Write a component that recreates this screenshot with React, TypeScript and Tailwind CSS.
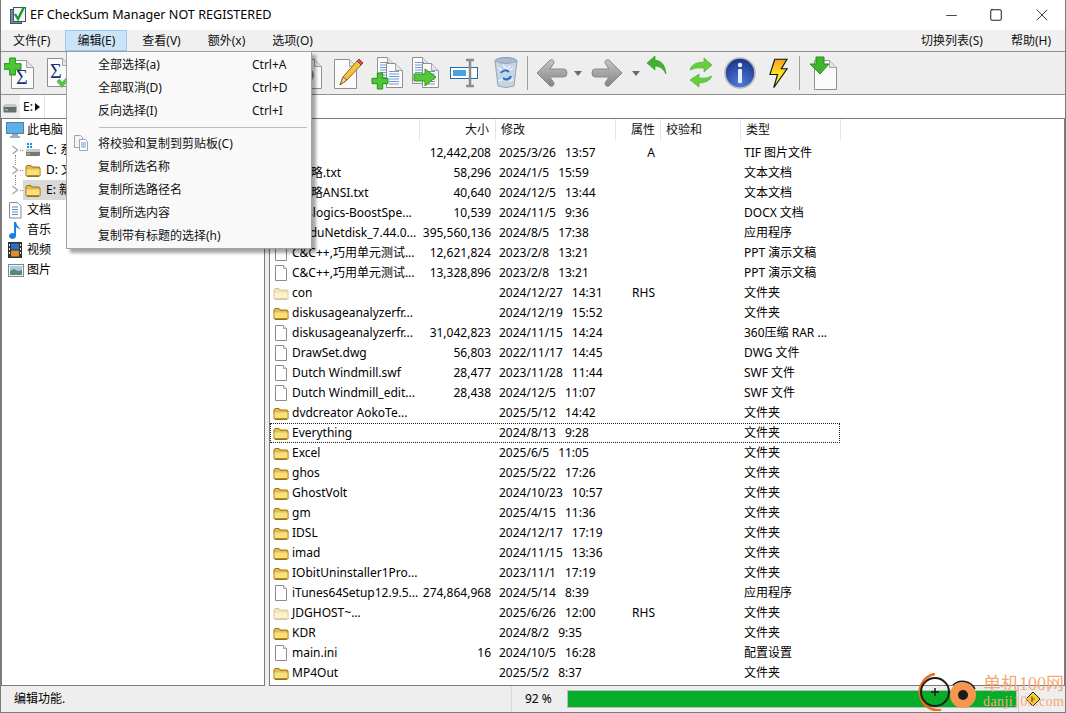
import { Minus, Square, X } from 'lucide-react'

const FONT = { fontFamily: '"Noto Sans", "Noto Sans CJK SC", sans-serif' }

function FileIcon() {
  return (
    <svg width="16" height="18" viewBox="0 0 16 18" className="shrink-0">
      <path d="M2.5 1.5h8l3 3v12h-11z" fill="#fff" stroke="#8a8a8a" />
      <path d="M10.5 1.5v3h3" fill="#eee" stroke="#a8a8a8" />
    </svg>
  )
}

function FolderIcon({ faded = false }: { faded?: boolean }) {
  return (
    <svg width="16" height="16" viewBox="0 0 16 16" className={`shrink-0 ${faded ? 'opacity-40' : ''}`}>
      <path d="M1 13.5V4.500l1-1h4l1 1.500h7l1 1v7.500l-1 1H2z" fill="#e3bb45" stroke="#94721a" />
      <path d="M1.500 7.500h13v6h-13z" fill="#f8e07e" />
      <path d="M1.500 13.500h13" stroke="#b48e1d" />
    </svg>
  )
}

function Sigma({ x, y, size = 20 }: { x: number; y: number; size?: number }) {
  return (
    <text x={x} y={y} fontSize={size} fontFamily="Liberation Serif, serif" fill="#1c2f78">
      Σ
    </text>
  )
}

function Doc({ x = 0, y = 0, w = 22, h = 28 }: { x?: number; y?: number; w?: number; h?: number }) {
  return (
    <g>
      <path d={`M${x + 0.5} ${y + 0.5}h${w - 7}l7 7v${h - 7}h-${w}z`} fill="#fbfbfb" stroke="#8f8f8f" />
      <path d={`M${x + w - 6.5} ${y + 0.5}v7h7`} fill="#e4e4e4" stroke="#a5a5a5" />
    </g>
  )
}

function GreenPlus({ x, y, s = 16 }: { x: number; y: number; s?: number }) {
  const t = s / 3
  return (
    <path
      d={`M${x + t} ${y}h${t}v${t}h${t}v${t}h-${t}v${t}h-${t}v-${t}h-${t}v-${t}h${t}z`}
      fill="#4fc637"
      stroke="#1f9316"
      strokeLinejoin="round"
    />
  )
}

function AddSumIcon() {
  return (
    <svg width="30" height="34" viewBox="0 0 30 34">
      <Doc x={7} y={4} w={22} h={28} />
      <Sigma x={12} y={28} size={20} />
      <GreenPlus x={0} y={2} s={17} />
    </svg>
  )
}

function CheckSumIcon() {
  return (
    <svg width="30" height="34" viewBox="0 0 30 34">
      <Doc x={0} y={2} w={22} h={28} />
      <Sigma x={3} y={22} size={20} />
      <path d="M11 24l4 5 9-10" fill="none" stroke="#58c44a" strokeWidth="4" />
    </svg>
  )
}

function DiscDocIcon() {
  return (
    <svg width="26" height="34" viewBox="0 0 26 34">
      <Doc x={3} y={3} w={22} h={29} />
      <circle cx="11" cy="19" r="7" fill="#8d8d8d" />
    </svg>
  )
}

function PencilDocIcon() {
  return (
    <svg width="30" height="34" viewBox="0 0 30 34">
      <Doc x={0} y={3} w={22} h={29} />
      <path d="M6 29l3-8 14-16 4 4-14 15z" fill="#f5c33b" stroke="#8c6a1a" />
      <path d="M6 29l3-8 4 3z" fill="#e9d3a5" stroke="#8c6a1a" />
      <path d="M23 5l2-2 4 4-2 2z" fill="#d8524f" stroke="#8c3a38" />
    </svg>
  )
}

function Lines({ x, y, n, w }: { x: number; y: number; n: number; w: number }) {
  return (
    <path
      d={Array.from({ length: n }, (_, i) => `M${x} ${y + i * 2.5 + 0.5}h${w}`).join('')}
      stroke="#6d9bd0"
      strokeWidth="1"
    />
  )
}

function AddDocIcon() {
  return (
    <svg width="32" height="34" viewBox="0 0 32 34">
      <Doc x={6} y={1} w={17} h={26} />
      <Lines x={9} y={6} n={8} w={9} />
      <Doc x={15} y={7} w={16} h={24} />
      <Lines x={18} y={15} n={6} w={10} />
      <GreenPlus x={1} y={17} s={16} />
    </svg>
  )
}

function MoveDocIcon() {
  return (
    <svg width="30" height="34" viewBox="0 0 30 34">
      <Doc x={1} y={1} w={17} h={26} />
      <Lines x={4} y={6} n={8} w={9} />
      <Doc x={11} y={7} w={16} h={24} />
      <Lines x={14} y={15} n={6} w={10} />
      <path d="M3 18h11v-5l11 8-11 9v-5H3z" fill="#55c838" stroke="#2a9a1c" />
    </svg>
  )
}

function RenameIcon() {
  return (
    <svg width="30" height="34" viewBox="0 0 30 34">
      <rect x="0.500" y="11.500" width="27" height="11" fill="#fff" stroke="#1f6fb0" />
      <rect x="3" y="14" width="13" height="6" fill="#4aa3e0" />
      <path d="M16 4h8M20 4v26M16 30h8" stroke="#8b8b8b" strokeWidth="2.500" fill="none" />
    </svg>
  )
}

function BinIcon() {
  return (
    <svg width="26" height="34" viewBox="0 0 26 34">
      <ellipse cx="13" cy="5" rx="11" ry="3.500" fill="#a9bbd0" stroke="#8c9aa8" />
      <path d="M2 5l3 25q8 3 16 0l3-25q-11 5-22 0z" fill="#c6d5e6" stroke="#9aa6b2" />
      <path d="M5 11l5 5M10 9l6 7M17 10l-5 6M20 12l-4 3M6 25l4-2M16 26l4-3" stroke="#eef3f8" strokeWidth="1.500" />
      <path d="M8 17a5 5 0 0 1 8-1M18 20a5 5 0 0 1-8 2" fill="none" stroke="#2f74c4" strokeWidth="2.200" />
    </svg>
  )
}

function GreyArrow({ flip = false }: { flip?: boolean }) {
  return (
    <svg width="32" height="30" viewBox="0 0 32 30" className={flip ? '-scale-x-100' : ''}>
      <defs>
        <linearGradient id="grey-arrow" x1="0" y1="0" x2="0" y2="1">
          <stop offset="0" stopColor="#c4c4c4" />
          <stop offset="1" stopColor="#858585" />
        </linearGradient>
      </defs>
      <path
        d="M1 15L14 2q4-1 4 3l-4 6h14q3 0 3 4t-3 4H14l4 6q0 4-4 3z"
        fill="url(#grey-arrow)"
        stroke="#8b8b8b"
      />
    </svg>
  )
}

function Caret() {
  return (
    <svg width="8" height="5" viewBox="0 0 8 5">
      <path d="M0 0h8L4 5z" fill="#6b6b6b" />
    </svg>
  )
}

function UndoIcon() {
  return (
    <svg width="20" height="20" viewBox="0 0 20 20">
      <path d="M0 7l8-7v4q10 1 11 14Q15 10 8 10v4z" fill="#3fb52f" stroke="#2a8f1f" strokeWidth=".6" />
    </svg>
  )
}

function RefreshIcon() {
  return (
    <svg width="24" height="32" viewBox="0 0 24 32">
      <path d="M1 13Q3 5 15 5V1l8 7-8 7v-4Q7 10 1 13z" fill="#63d13f" stroke="#46a82c" strokeWidth=".6" />
      <path d="M23 19q-3 7-13 7v4l-9-7 9-6v4q8 1 13-2z" fill="#63d13f" stroke="#46a82c" strokeWidth=".6" />
    </svg>
  )
}

function InfoIcon() {
  return (
    <svg width="32" height="32" viewBox="0 0 32 32">
      <defs>
        <radialGradient id="info-ball" cx="0.5" cy="0.85" r="0.9">
          <stop offset="0" stopColor="#4f7be0" />
          <stop offset="1" stopColor="#17307f" />
        </radialGradient>
      </defs>
      <circle cx="16" cy="16" r="15" fill="url(#info-ball)" stroke="#b9b9b9" strokeWidth="1.600" />
      <circle cx="16" cy="8" r="2.200" fill="#e8eefb" />
      <rect x="14" y="12" width="4" height="14" rx="1" fill="#e8eefb" />
    </svg>
  )
}

function BoltIcon() {
  return (
    <svg width="19" height="31" viewBox="0 0 20 32">
      <defs>
        <linearGradient id="bolt-fill" x1="0" y1="0" x2="0" y2="1">
          <stop offset="0" stopColor="#f7a21b" />
          <stop offset="0.5" stopColor="#ffe21f" />
          <stop offset="1" stopColor="#fff24a" />
        </linearGradient>
      </defs>
      <path d="M6 1h13l-6 10h6L5 31l4-14H1z" fill="url(#bolt-fill)" stroke="#111" strokeWidth="1.200" />
    </svg>
  )
}

function DownloadDocIcon() {
  return (
    <svg width="28" height="34" viewBox="0 0 28 34">
      <Doc x={4} y={4} w={22} h={29} />
      <path d="M6 1h8v7h5L10 18 0 8h6z" fill="#3fb52f" stroke="#2a8f1f" />
    </svg>
  )
}

function Separator({ className }: { className: string }) {
  return <div className={`h-[34px] w-px bg-[#a0a0a0] ${className}`} />
}

function TitleBar() {
  return (
    <div className="flex h-[30px] items-center bg-white pl-[9px]">
      <svg width="17" height="18" viewBox="0 0 17 18">
        <rect x="0.500" y="3.500" width="11" height="14" fill="#6f8fa8" stroke="#3d5266" />
        <rect x="3.500" y="1.500" width="12" height="14" fill="#f4f4f4" stroke="#3d5266" />
        <path d="M5 8l3 5 6-12" fill="none" stroke="#159a2b" strokeWidth="2.400" />
      </svg>
      <span className="ml-[3px] text-[12.6px] text-black">EF CheckSum Manager NOT REGISTERED</span>
      <div className="ml-auto flex items-center pr-[13px]">
        <Minus className="h-[17px] w-[17px] text-black" strokeWidth={1} />
        <Square className="ml-[29px] h-[14px] w-[14px] text-black" strokeWidth={1.5} />
        <X className="ml-[29px] h-[20px] w-[20px] text-black" strokeWidth={0.9} />
      </div>
    </div>
  )
}

function MenuBar() {
  const items = ['文件(F)', '编辑(E)', '查看(V)', '额外(x)', '选项(O)']
  return (
    <div className="flex h-[21px] items-stretch bg-[#f0f0f0] text-[12px] text-[#111]">
      <div className="flex gap-[3px]">
        {items.map((item) => (
          <div
            key={item}
            className={`flex items-center border px-[11px] ${
              item === '编辑(E)' ? 'border-[#99c9ef] bg-[#cce4f7]' : 'border-transparent'
            }`}
          >
            {item}
          </div>
        ))}
      </div>
      <div className="ml-auto flex items-center gap-[28px] pr-[14px]">
        <span>切换列表(S)</span>
        <span>帮助(H)</span>
      </div>
    </div>
  )
}

function Toolbar() {
  return (
    <div className="flex h-[44px] items-center border-y border-[#8f8f8f] bg-[#eeeeee] pl-[3px]">
      <AddSumIcon />
      <div className="ml-[13px]">
        <CheckSumIcon />
      </div>
      <div className="ml-[219px]">
        <DiscDocIcon />
      </div>
      <div className="ml-[12px]">
        <PencilDocIcon />
      </div>
      <div className="ml-[7px]">
        <AddDocIcon />
      </div>
      <div className="ml-[8px]">
        <MoveDocIcon />
      </div>
      <div className="ml-[9px]">
        <RenameIcon />
      </div>
      <div className="ml-[13px]">
        <BinIcon />
      </div>
      <Separator className="ml-[8px]" />
      <div className="ml-[8px]">
        <GreyArrow />
      </div>
      <div className="ml-[6px]">
        <Caret />
      </div>
      <div className="ml-[9px]">
        <GreyArrow flip />
      </div>
      <div className="ml-[9px]">
        <Caret />
      </div>
      <div className="mb-[14px] ml-[7px]">
        <UndoIcon />
      </div>
      <div className="ml-[22px]">
        <RefreshIcon />
      </div>
      <div className="ml-[11px]">
        <InfoIcon />
      </div>
      <div className="ml-[13px]">
        <BoltIcon />
      </div>
      <Separator className="ml-[11px]" />
      <div className="ml-[10px]">
        <DownloadDocIcon />
      </div>
    </div>
  )
}

function AddressBar() {
  return (
    <div className="flex h-[23px] items-center bg-white text-[12px] text-black">
      <div className="flex h-full w-[19px] items-center justify-center bg-[#eeeeee] pr-[2px] pt-[3px]">
        <svg width="14" height="10" viewBox="0 0 14 10">
          <rect x="0.500" y="2.500" width="13" height="7" rx="1" fill="#6b6b6b" />
          <rect x="1" y="1" width="12" height="3" rx="1" fill="#c8c8c8" />
          <rect x="2" y="6" width="3" height="1.500" fill="#5fe05f" />
        </svg>
      </div>
      <div className="flex h-full w-[25px] items-center border-r border-[#e3e3e3] pl-[3px] pt-px">
        <span>E:</span>
        <svg width="5" height="8" viewBox="0 0 5 8" className="ml-[2px]">
          <path d="M0 0l5 4-5 4z" fill="#111" />
        </svg>
      </div>
    </div>
  )
}

const TREE_DRIVES = [
  { label: 'C: 系统', drive: true },
  { label: 'D: 文档', drive: false },
  { label: 'E: 新加卷', drive: false, active: true },
]

function Chevron() {
  return (
    <svg width="8" height="10" viewBox="0 0 8 10" className="shrink-0">
      <path d="M1.500 1l5 4-5 4" fill="none" stroke="#a6a6a6" strokeWidth="1.400" />
    </svg>
  )
}

function DriveIcon() {
  return (
    <svg width="16" height="16" viewBox="0 0 16 16" className="shrink-0">
      <rect x="1" y="8" width="14" height="6" rx="1" fill="#777" />
      <rect x="1" y="7" width="14" height="3" rx="1" fill="#c9c9c9" />
      <rect x="2" y="11" width="3" height="1.500" fill="#5fe05f" />
      <path d="M2 1h2v2H2zM5 1h2v2H5zM2 4h2v2H2zM5 4h2v2H5z" fill="#1d8fe8" />
    </svg>
  )
}

function ComputerIcon() {
  return (
    <svg width="18" height="16" viewBox="0 0 18 16" className="shrink-0">
      <rect x="0.500" y="0.500" width="17" height="11" fill="#5ab0ea" stroke="#5e7f9a" />
      <path d="M6 12h6v2H6z" fill="#9ab" />
      <path d="M4 15h10" stroke="#7d93a6" strokeWidth="1.500" />
    </svg>
  )
}

function LibraryIcon({ kind }: { kind: 'doc' | 'music' | 'video' | 'image' }) {
  if (kind === 'doc') {
    return (
      <svg width="14" height="17" viewBox="0 0 14 17" className="shrink-0">
        <path d="M1.500.5h8l3.500 3.500v12H1.500z" fill="#fff" stroke="#888" />
        <path d="M4 5h6M4 7.500h6M4 10h6M4 12.500h6" stroke="#4a8fd0" />
      </svg>
    )
  }
  if (kind === 'music') {
    return (
      <svg width="14" height="18" viewBox="0 0 14 18" className="shrink-0">
        <path d="M6 1h2q1 5 5 7-3 0-5-2v9a3.500 3 0 1 1-2-2.800z" fill="#1c7fe0" />
      </svg>
    )
  }
  if (kind === 'video') {
    return (
      <svg width="14" height="16" viewBox="0 0 14 16" className="shrink-0">
        <rect width="14" height="16" fill="#333" />
        <rect x="3" y="1.500" width="8" height="6" fill="#2e6fbe" />
        <rect x="3" y="8.500" width="8" height="6" fill="#d9902f" />
        <path d="M1 2h1v2H1zM1 6h1v2H1zM1 10h1v2H1zM12 2h1v2h-1zM12 6h1v2h-1zM12 10h1v2h-1z" fill="#eee" />
      </svg>
    )
  }
  return (
    <svg width="16" height="13" viewBox="0 0 16 13" className="shrink-0">
      <rect x="0.500" y="0.500" width="15" height="12" fill="#eef3f7" stroke="#7c8a96" />
      <rect x="2" y="2" width="12" height="5" fill="#a9cbe6" />
      <path d="M2 7l4-2 4 2 4-1v5H2z" fill="#5b8a6b" />
    </svg>
  )
}

function Tree() {
  return (
    <div className="h-full w-[264px] shrink-0 overflow-hidden border border-[#7a7a7a] bg-white pt-[1px] text-[12px] text-black">
      <div className="flex h-[20px] items-center pl-[4px]">
        <ComputerIcon />
        <span className="ml-[3px]">此电脑</span>
      </div>
      {TREE_DRIVES.map((row) => (
        <div key={row.label} className="relative flex h-[20px] items-center pl-[9px]">
          <Chevron />
          {!row.active && (
            <span className="absolute left-[13px] top-[15px] h-[10px] border-l border-dotted border-[#888]" />
          )}
          <span className="ml-px w-[3px] border-t border-dotted border-[#888]" />
          <div className={`flex h-full flex-1 items-center pl-[2px] ${row.active ? 'bg-[#d9d9d9]' : ''}`}>
            {row.drive ? <DriveIcon /> : <FolderIcon />}
            <span className="ml-[5px]">{row.label}</span>
          </div>
        </div>
      ))}
      {[
        { label: '文档', kind: 'doc' as const },
        { label: '音乐', kind: 'music' as const },
        { label: '视频', kind: 'video' as const },
        { label: '图片', kind: 'image' as const },
      ].map((row) => (
        <div key={row.label} className="flex h-[20px] items-center pl-[6px]">
          <div className="flex w-[19px] shrink-0 items-center">
            <LibraryIcon kind={row.kind} />
          </div>
          <span>{row.label}</span>
        </div>
      ))}
    </div>
  )
}

type Row = {
  name: string
  size?: string
  date: string
  time: string
  attr?: string
  type: string
  icon: 'file' | 'folder' | 'hidden'
  focused?: boolean
}

const ROWS: Row[] = [
  { name: '.TIF', size: '12,442,208', date: '2025/3/26', time: '13:57', attr: 'A', type: 'TIF 图片文件', icon: 'file' },
  { name: '9攻略.txt', size: '58,296', date: '2024/1/5', time: '15:59', type: '文本文档', icon: 'file' },
  { name: '9攻略ANSI.txt', size: '40,640', date: '2024/12/5', time: '13:44', type: '文本文档', icon: 'file' },
  { name: 'Auslogics-BoostSpe...', size: '10,539', date: '2024/11/5', time: '9:36', type: 'DOCX 文档', icon: 'file' },
  { name: 'BaiduNetdisk_7.44.0...', size: '395,560,136', date: '2024/8/5', time: '17:38', type: '应用程序', icon: 'file' },
  { name: 'C&C++,巧用单元测试...', size: '12,621,824', date: '2023/2/8', time: '13:21', type: 'PPT 演示文稿', icon: 'file' },
  { name: 'C&C++,巧用单元测试...', size: '13,328,896', date: '2023/2/8', time: '13:21', type: 'PPT 演示文稿', icon: 'file' },
  { name: 'con', date: '2024/12/27', time: '14:31', attr: 'RHS', type: '文件夹', icon: 'hidden' },
  { name: 'diskusageanalyzerfr...', date: '2024/12/19', time: '15:52', type: '文件夹', icon: 'folder' },
  { name: 'diskusageanalyzerfr...', size: '31,042,823', date: '2024/11/15', time: '14:24', type: '360压缩 RAR ...', icon: 'file' },
  { name: 'DrawSet.dwg', size: '56,803', date: '2022/11/17', time: '14:45', type: 'DWG 文件', icon: 'file' },
  { name: 'Dutch Windmill.swf', size: '28,477', date: '2023/11/28', time: '11:44', type: 'SWF 文件', icon: 'file' },
  { name: 'Dutch Windmill_edit...', size: '28,438', date: '2024/12/5', time: '11:07', type: 'SWF 文件', icon: 'file' },
  { name: 'dvdcreator AokoTe...', date: '2025/5/12', time: '14:42', type: '文件夹', icon: 'folder' },
  { name: 'Everything', date: '2024/8/13', time: '9:28', type: '文件夹', icon: 'folder', focused: true },
  { name: 'Excel', date: '2025/6/5', time: '11:05', type: '文件夹', icon: 'folder' },
  { name: 'ghos', date: '2025/5/22', time: '17:26', type: '文件夹', icon: 'folder' },
  { name: 'GhostVolt', date: '2024/10/23', time: '10:57', type: '文件夹', icon: 'folder' },
  { name: 'gm', date: '2025/4/15', time: '11:36', type: '文件夹', icon: 'folder' },
  { name: 'IDSL', date: '2024/12/17', time: '17:19', type: '文件夹', icon: 'folder' },
  { name: 'imad', date: '2024/11/15', time: '13:36', type: '文件夹', icon: 'folder' },
  { name: 'IObitUninstaller1Pro...', date: '2023/11/1', time: '17:19', type: '文件夹', icon: 'folder' },
  { name: 'iTunes64Setup12.9.5...', size: '274,864,968', date: '2024/5/14', time: '8:39', type: '应用程序', icon: 'file' },
  { name: 'JDGHOST~...', date: '2025/6/26', time: '12:00', attr: 'RHS', type: '文件夹', icon: 'hidden' },
  { name: 'KDR', date: '2024/8/2', time: '9:35', type: '文件夹', icon: 'folder' },
  { name: 'main.ini', size: '16', date: '2024/10/5', time: '16:28', type: '配置设置', icon: 'file' },
  { name: 'MP4Out', date: '2025/5/2', time: '8:37', type: '文件夹', icon: 'folder' },
]

function FileList() {
  return (
    <div className="h-full min-w-0 flex-1 overflow-hidden border border-[#7a7a7a] bg-white text-[12px] text-black">
      <div className="mb-[2px] flex h-[22px] text-[#111]">
        <div className="w-[150px] border-r border-[#e5e5e5]" />
        <div className="flex w-[76px] items-center justify-end border-r border-[#e5e5e5] pr-[6px]">大小</div>
        <div className="flex w-[120px] items-center border-r border-[#e5e5e5] pl-[5px]">修改</div>
        <div className="flex w-[45px] items-center justify-end border-r border-[#e5e5e5] pr-[5px]">属性</div>
        <div className="flex w-[80px] items-center border-r border-[#e5e5e5] pl-[5px]">校验和</div>
        <div className="flex w-[100px] items-center border-r border-[#e5e5e5] pl-[5px]">类型</div>
      </div>
      {ROWS.map((row, i) => (
        <div
          key={i}
          className={`flex h-[20px] w-[570px] items-center border border-dotted ${
            row.focused ? 'border-[#222]' : 'border-transparent'
          }`}
        >
          <div className="flex w-[149px] shrink-0 items-center whitespace-nowrap pl-[2px]">
            {row.icon === 'file' ? (
              <FileIcon />
            ) : (
              <FolderIcon faded={row.icon === 'hidden'} />
            )}
            <span className="ml-[3px]">{row.name}</span>
          </div>
          <div className="w-[76px] shrink-0 whitespace-nowrap pr-[5px] text-right">{row.size}</div>
          <div className="flex w-[120px] shrink-0 gap-[9px] whitespace-nowrap pl-[3px]">
            <span>{row.date}</span>
            <span>{row.time}</span>
          </div>
          <div className="w-[39px] shrink-0 text-right">{row.attr}</div>
          <div className="w-[89px] shrink-0" />
          <div className="whitespace-nowrap">{row.type}</div>
        </div>
      ))}
    </div>
  )
}

function StatusBar() {
  return (
    <div className="flex h-[27px] items-center border-b border-[#7a7a7a] bg-[#eeeeee] text-[12px] text-black">
      <div className="flex h-full w-[511px] items-center border-r border-[#d8d8d8] pl-[13px]">编辑功能.</div>
      <div className="w-[55px] pl-[13px]">92 %</div>
      <div className="flex h-[18px] w-[450px] border border-[#bdbdbd] bg-[#06ad29]" />
      <div className="ml-[1px] h-full w-[20px] border-l border-[#cfcfcf]" />
    </div>
  )
}

const MENU: (string[] | null)[] = [
  ['全部选择(a)', 'Ctrl+A'],
  ['全部取消(D)', 'Ctrl+D'],
  ['反向选择(I)', 'Ctrl+I'],
  null,
  ['将校验和复制到剪贴板(C)'],
  ['复制所选名称'],
  ['复制所选路径名'],
  ['复制所选内容'],
  ['复制带有标题的选择(h)'],
]

function EditMenu() {
  return (
    <div className="absolute left-[65px] top-[51px] w-[246px] border border-[#a0a0a0] bg-[#f9f9f9] py-px text-[12px] text-[#111] shadow-[4px_4px_3px_rgba(0,0,0,0.35)]">
      {MENU.map((item, i) =>
        item ? (
          <div key={i} className="relative flex h-[23px] items-center pl-[31px]">
            {i === 4 && (
              <svg width="16" height="16" viewBox="0 0 16 16" className="absolute left-[6px] top-[3px]">
                <path d="M1.500.5h6l2 2v10h-8z" fill="#f4f4f4" stroke="#9aa6b2" />
                <path d="M6.500 4.500h6l2 2v9h-8z" fill="#fff" stroke="#9aa6b2" />
                <path d="M8 8h5M8 10h5M8 12h5" stroke="#6d9bd0" />
              </svg>
            )}
            <span className="w-[154px] whitespace-nowrap">{item[0]}</span>
            {item[1] && <span>{item[1]}</span>}
          </div>
        ) : (
          <div key={i} className="flex h-[10px] items-center pl-[32px] pr-[4px]">
            <div className="h-px flex-1 bg-[#bdbdbd]" />
          </div>
        ),
      )}
    </div>
  )
}

function Watermark() {
  return (
    <div className="absolute bottom-0 right-0 flex h-[38px] w-[150px] items-end">
      <svg width="66" height="38" viewBox="0 0 66 38" className="absolute left-[2px] top-[-2px]">
        <path d="M18 1A17.500 17.500 0 0 0 24 37" fill="none" stroke="#f26a11" strokeWidth="2.500" />
        <circle cx="18" cy="19" r="14" fill="none" stroke="#1c1c1c" strokeWidth="2" />
        <path d="M14 19h8M18 15v8" stroke="#1c1c1c" strokeWidth="1.500" />
        <circle cx="46" cy="22" r="13" fill="#f5954e" />
        <path d="M36 12a14 14 0 0 1 22 4" fill="none" stroke="#1c1c1c" strokeWidth="1.500" />
        <circle cx="46" cy="22" r="5" fill="#1c1c1c" />
      </svg>
      <svg width="16" height="16" viewBox="0 0 16 16" className="absolute left-[110px] top-[16px]">
        <path d="M8 1l7 7-7 7-7-7z" fill="#ffd21f" stroke="#222" />
        <path d="M7 5v6M7 8h3" stroke="#222" />
      </svg>
      <div
        className="absolute left-[68px] top-0 whitespace-nowrap text-[18px] leading-[19px] text-[#f5a878]"
        style={{ fontFamily: '"Liberation Serif", "Noto Sans CJK SC", serif' }}
      >
        单机100网
      </div>
      <div
        className="absolute left-[68px] top-[19px] whitespace-nowrap text-[14px] leading-[15px] tracking-[0.4px] text-[#f5a878]"
        style={{ fontFamily: '"Liberation Serif", serif' }}
      >
        danji100.com
      </div>
    </div>
  )
}

export default function App() {
  return (
    <div className="relative flex h-[713px] w-[1066px] flex-col overflow-hidden border-x border-[#7a7a7a] bg-[#eeeeee]" style={FONT}>
      <TitleBar />
      <MenuBar />
      <Toolbar />
      <AddressBar />
      <div className="flex min-h-0 flex-1 gap-[4px]">
        <Tree />
        <FileList />
      </div>
      <StatusBar />
      <EditMenu />
      <Watermark />
    </div>
  )
}
